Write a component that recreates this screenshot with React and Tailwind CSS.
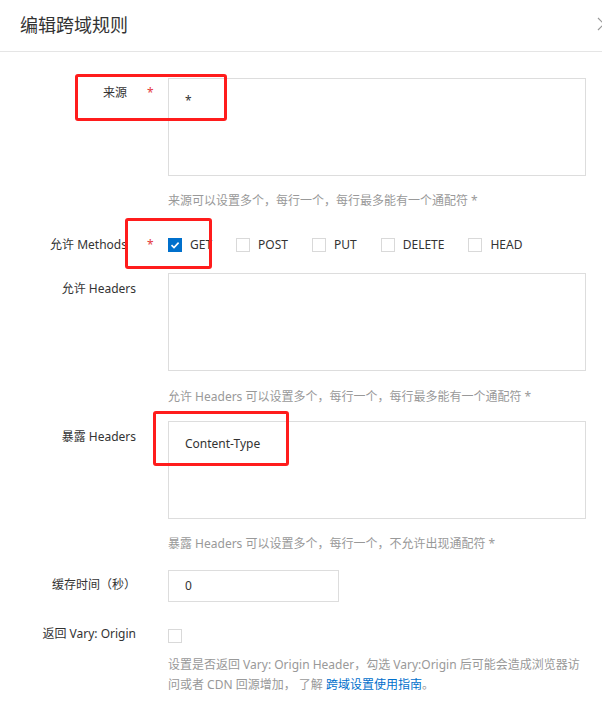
import React from "react";

const font = { fontFamily: '"Noto Sans", "Noto Sans CJK SC", sans-serif' };

function Label({ children, required, className = "" }) {
  return (
    <div className={"w-[168px] shrink-0 flex justify-end text-[12px] leading-[20px] text-[#333] " + className}>
      <span className="whitespace-nowrap">{children}</span>
      {required ? (
        <span className="w-[41px] pl-[20px] text-[#e4393c]">*</span>
      ) : (
        <span className="w-[32px]" />
      )}
    </div>
  );
}

function Hint({ children, className = "" }) {
  return (
    <div className={"pl-[168px] pr-[16px] text-[12px] leading-[20px] text-[#999] " + className}>{children}</div>
  );
}

function Box({ checked }) {
  return checked ? (
    <span className="w-[14px] h-[14px] bg-[#0070cc] flex items-center justify-center shrink-0">
      <svg width="10" height="10" viewBox="0 0 10 10">
        <path d="M1.5 5.2 L4 7.6 L8.6 2.6" fill="none" stroke="#fff" strokeWidth="1.6" />
      </svg>
    </span>
  ) : (
    <span className="w-[14px] h-[14px] border border-[#d9d9d9] bg-white shrink-0" />
  );
}

function RedBox({ className }) {
  return <div className={"absolute border-[3px] border-[#ff1c1c] rounded-[3px] pointer-events-none " + className} />;
}

export default function App() {
  const methods = [
    ["GET", true],
    ["POST", false],
    ["PUT", false],
    ["DELETE", false],
    ["HEAD", false],
  ];
  return (
    <div className="relative w-[602px] h-[708px] bg-white overflow-hidden" style={font}>
      <div className="h-[52px] border-b border-[#e5e5e5] flex items-center justify-between pl-[20px]">
        <span className="text-[18px] text-[#333] leading-[24px] -mt-[2px]">编辑跨域规则</span>
        <svg width="14" height="14" viewBox="0 0 14 14" className="-mr-[9px] -mt-[3px]">
          <path d="M1 1 L13 13 M13 1 L1 13" stroke="#999" strokeWidth="1.2" fill="none" />
        </svg>
      </div>

      <div className="flex mt-[26px]">
        <Label required className="pt-[5px]">来源</Label>
        <div className="w-[418px] h-[98px] border border-[#ddd] pl-[16px] pt-[13px] text-[12px] leading-[18px] text-[#333]">*</div>
      </div>
      <Hint className="mt-[15px]">来源可以设置多个，每行一个，每行最多能有一个通配符 *</Hint>

      <div className="flex items-center mt-[24px] h-[20px]">
        <Label required>允许 Methods</Label>
        <div className="flex items-center text-[12px] text-[#333]">
          {methods.map(([m, c]) => (
            <div key={m} className="flex items-center gap-[8px] mr-[24px]">
              <Box checked={c} />
              <span>{m}</span>
            </div>
          ))}
        </div>
      </div>

      <div className="flex mt-[18px]">
        <Label className="pt-[6px]">允许 Headers</Label>
        <div className="w-[418px] h-[98px] border border-[#ddd]" />
      </div>
      <Hint className="mt-[16px]">允许 Headers 可以设置多个，每行一个，每行最多能有一个通配符 *</Hint>

      <div className="flex mt-[14px]">
        <Label className="pt-[6px]">暴露 Headers</Label>
        <div className="w-[418px] h-[98px] border border-[#ddd] pl-[16px] pt-[13px] text-[12px] leading-[18px] text-[#333]">Content-Type</div>
      </div>
      <Hint className="mt-[15px]">暴露 Headers 可以设置多个，每行一个，不允许出现通配符 *</Hint>

      <div className="flex items-center mt-[16px]">
        <Label className="-mt-[2px]">缓存时间（秒）</Label>
        <div className="w-[171px] h-[32px] border border-[#ddd] pl-[16px] flex items-center text-[12px] text-[#333]">0</div>
      </div>

      <div className="flex items-center mt-[24px] h-[20px]">
        <Label className="-mt-[5px]">返回 Vary: Origin</Label>
        <Box checked={false} />
      </div>
      <Hint className="mt-[9px] leading-[19px]">
        设置是否返回 Vary: Origin Header，勾选 Vary:Origin 后可能会造成浏览器访问或者 CDN 回源增加， 了解 <span className="text-[#0070cc]">跨域设置使用指南</span>。
      </Hint>

      <RedBox className="left-[75px] top-[74px] w-[152px] h-[47px]" />
      <RedBox className="left-[125px] top-[218px] w-[87px] h-[51px]" />
      <RedBox className="left-[153px] top-[411px] w-[136px] h-[55px]" />
    </div>
  );
}
